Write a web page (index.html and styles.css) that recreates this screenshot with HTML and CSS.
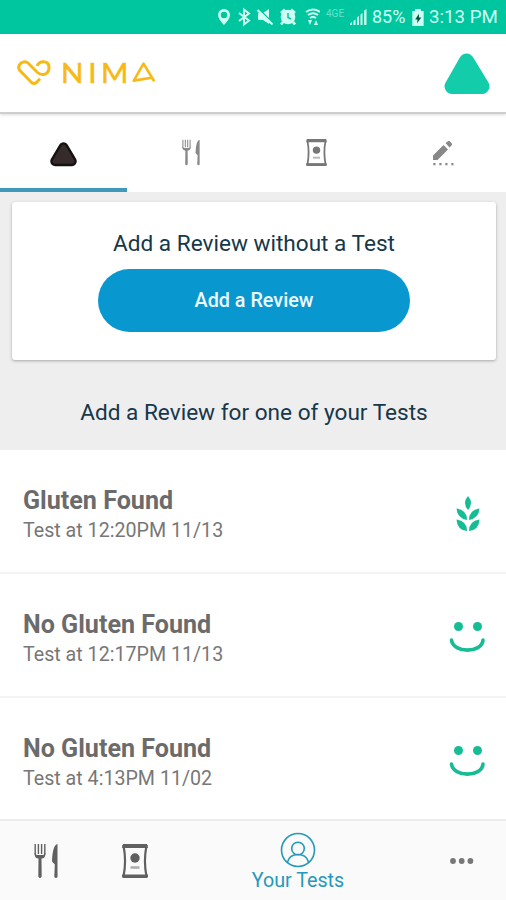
FILE: index.html
```html
<!DOCTYPE html>
<html lang="en">
<head>
<meta charset="utf-8">
<meta name="viewport" content="width=device-width">
<title>Nima – Your Tests</title>
<link rel="stylesheet" href="styles.css">
</head>
<body>
<svg width="0" height="0" class="defs" aria-hidden="true">
  <symbol id="cutlery" viewBox="0 0 24 34">
    <path d="M1.2 0V9.5Q1.2 13 6 13T10.8 9.5V0M4.4 0V10M7.6 0V10" fill="none" stroke="currentColor" stroke-width="1.4"/>
    <path d="M.5 9Q.5 14.500 4.500 14.500L4.300 32.500Q6 35.500 7.700 32.500L7.500 14.500Q11.500 14.500 11.500 9L9.500 11H2.500ZM23.500 0Q18.500 1 18 17.500L20.800 20.500L20.300 33Q22 35 23.500 33Z" fill="currentColor"/>
  </symbol>
  <symbol id="packet" viewBox="0 0 26 34">
    <path d="M1.600 2H24.400Q21.500 17 24.400 32H1.600Q4.500 17 1.600 2Z" fill="none" stroke="currentColor" stroke-width="2.200"/>
    <path d="M1 0H25L26 4H0ZM0 30.500H26V33L25 34H1L0 33Z" fill="currentColor"/>
    <circle cx="13" cy="14" r="4.700" fill="currentColor"/>
    <path d="M8.500 23.500H17.500" stroke="currentColor" stroke-width="2.500" opacity=".5"/>
  </symbol>
  <symbol id="smile" viewBox="0 0 36 30">
    <circle cx="9.500" cy="4.500" r="4.500" fill="currentColor"/>
    <circle cx="28.500" cy="4.500" r="4.500" fill="currentColor"/>
    <path d="M2.500 18C4 31.500 33 31.500 34 18" fill="none" stroke="currentColor" stroke-width="3.600" stroke-linecap="round"/>
  </symbol>
</svg>

<div class="status">
  <svg class="status-icons" viewBox="0 0 102 20" fill="currentColor">
    <path fill-rule="evenodd" d="M6 2A6 6 0 0 0 0 8C0 12 6 18 6 18S12 12 12 8A6 6 0 0 0 6 2ZM6 4.800A3.200 3.200 0 1 1 6 11.200A3.200 3.200 0 0 1 6 4.800Z"/>
    <path d="M21 6L31 13.500L26 17.500V2.500L31 6.500L21 14" fill="none" stroke="currentColor" stroke-width="2"/>
    <path d="M40 6H45L51 2V17L45 13H40Z"/>
    <path d="M41 2L55 16" stroke="#00c6a0" stroke-width="1.500"/>
    <path d="M39.500 3L54.500 17.500" stroke="currentColor" stroke-width="2.200"/>
    <circle cx="70" cy="10" r="7.300"/>
    <path d="M63 6L67 2.500M77 6L73 2.500M65 15L63 17.500M75 15L77 17.500" stroke="currentColor" stroke-width="2.800"/>
    <path d="M70 6V10.500L73 12" fill="none" stroke="#00c6a0" stroke-width="1.500"/>
    <path d="M88 5Q95 0 102 5M90 8Q95 4.500 100 8M92 11Q95 9 98 11" fill="none" stroke="currentColor" stroke-width="2"/>
    <path d="M90 13H94L92 18ZM96 18H100L98 13Z"/>
  </svg>
  <span class="network">4GE</span>
  <svg class="signal" viewBox="0 0 17 16" fill="currentColor"><path d="M0 16V14.500L2 13V16ZM3.500 16V12L5.500 10.500V16ZM7 16V8.500L9 7V16ZM10.500 16V5.500L12.500 4V16ZM14.200 16V1.500L16.500 0V16Z"/></svg>
  <span class="battery-text">85%</span>
  <svg class="battery" viewBox="0 0 12 18"><path d="M3 0H9V2H12V18H0V2H3Z" fill="currentColor"/><path d="M7 5L3 11H5.500L5 15L9.500 9H7Z" fill="#064f46"/></svg>
  <span class="clock">3:13 PM</span>
</div>

<header class="header">
  <div class="logo" role="img" aria-label="Nima">
    <svg class="heart" viewBox="0 0 33 26" fill="none" stroke="currentColor" stroke-width="3"><path d="M19.500 6C22 0 31.500 0 31.500 7.500C31.500 14.500 24.500 16.500 20 12.500L11 3.500C6.500 -1 -1 4.500 2 10L14 22.500Q16.500 24.500 19 22.500L22.500 18.800"/></svg>
    <span class="wordmark">NIM</span>
    <svg class="delta" viewBox="0 0 24 20" fill="none" stroke="currentColor" stroke-width="2.600" stroke-linejoin="round"><path d="M22.200 19.200L11.500 1.600L1.800 18.600L19.500 15.800"/></svg>
  </div>
  <svg class="device" viewBox="0 0 46 42"><path d="M22.500 8L38 33.500H8Z" fill="currentColor" stroke="currentColor" stroke-width="15" stroke-linejoin="round"/></svg>
</header>

<nav class="tabs">
  <a class="tab active"><svg class="tab-device" viewBox="0 0 26 24"><path d="M13 5L21 18.500H5Z" fill="#362b2b" stroke="#151111" stroke-width="9.500" stroke-linejoin="round"/><path d="M13 5L21 18.500H5Z" fill="#362b2b" stroke="#362b2b" stroke-width="5" stroke-linejoin="round"/></svg></a>
  <a class="tab"><svg class="tab-cutlery"><use href="#cutlery"/></svg></a>
  <a class="tab"><svg class="tab-packet"><use href="#packet"/></svg></a>
  <a class="tab"><svg class="tab-pencil" viewBox="0 0 21 25" fill="currentColor"><path d="M0 19V14.500L10.500 4L15 8.500L4.500 19ZM12.500 2L15 .2Q16 -.5 17 .5L18.800 2.500Q19.500 3.500 18.500 4.500L16.500 6.500Z"/><path d="M.3 22H2.500V24.300H.3ZM6.300 22H8.500V24.300H6.300ZM12.300 22H14.500V24.300H12.300ZM18.300 22H20.500V24.300H18.300Z"/></svg></a>
</nav>

<section class="review">
  <div class="card">
    <h2 class="title">Add a Review without a Test</h2>
    <button class="button">Add a Review</button>
  </div>
  <h2 class="title list-title">Add a Review for one of your Tests</h2>
</section>

<main class="list">
  <article class="row">
    <div><h3>Gluten Found</h3><p>Test at 12:20PM 11/13</p></div>
    <svg class="wheat" viewBox="0 0 24 36" fill="currentColor">
      <path d="M12 0Q18 7 12 14Q6 7 12 0ZM.5 12.500Q11 14 11 24Q1 22 .5 12.500ZM23.500 12.500Q13 14 13 24Q23 22 23.500 12.500ZM.5 23.500Q11 25 11 35Q1 34 .5 23.500ZM23.500 23.500Q13 25 13 35Q23 34 23.500 23.500Z"/>
    </svg>
  </article>
  <article class="row">
    <div><h3>No Gluten Found</h3><p>Test at 12:17PM 11/13</p></div>
    <svg class="smile"><use href="#smile"/></svg>
  </article>
  <article class="row">
    <div><h3>No Gluten Found</h3><p>Test at 4:13PM 11/02</p></div>
    <svg class="smile"><use href="#smile"/></svg>
  </article>
</main>

<nav class="bottom">
  <a class="item"><svg class="nav-cutlery"><use href="#cutlery"/></svg></a>
  <a class="item"><svg class="nav-packet"><use href="#packet"/></svg></a>
  <a class="item selected">
    <svg class="person" viewBox="0 0 36 36" fill="none" stroke="currentColor" stroke-width="1.600"><circle cx="18" cy="18" r="16.500"/><circle cx="18" cy="16.500" r="6.300"/><path d="M7.500 30C9 24.500 13 22.500 18 22.500S27 24.500 28.500 30"/></svg>
    <span>Your Tests</span>
  </a>
  <a class="item"><svg class="more" viewBox="0 0 24 6" fill="currentColor"><circle cx="3" cy="3" r="2.900"/><circle cx="11.700" cy="3" r="2.900"/><circle cx="20.400" cy="3" r="2.900"/></svg></a>
</nav>
</body>
</html>
```
FILE: styles.css
```css
* { box-sizing: border-box; }
body {
  margin: 0;
  width: 506px;
  height: 900px;
  overflow: hidden;
  display: flex;
  flex-direction: column;
  background: #fff;
  font-family: Roboto, sans-serif;
}
h2, h3, p { margin: 0; }
svg { display: block; flex: none; }
.defs { display: none; }

.status {
  height: 34px;
  flex: none;
  display: flex;
  align-items: center;
  padding-left: 218px;
  background: #00c6a0;
  color: #ccfff1;
  font-size: 18.700px;
  line-height: 36px;
  white-space: nowrap;
}
.status-icons { width: 102px; height: 20px; }
.network { width: 20px; margin-left: 6px; font-size: 10px; line-height: 20px; align-self: flex-start; margin-top: 4px; opacity: .5; }
.signal { width: 17px; height: 16px; margin-left: 4px; }
.battery-text { width: 34px; margin-left: 5px; font-size: 18px; }
.battery { width: 12px; height: 17px; margin-left: 6px; }
.clock { margin-left: 5px; }

.header {
  position: relative;
  height: 80px;
  flex: none;
  display: flex;
  justify-content: space-between;
  padding: 19px 16px 0 17px;
  background: #fff;
  border-bottom: 2px solid #cecece;
  box-shadow: 0 1px 3px rgba(0, 0, 0, .14);
}
.logo { display: flex; color: #f7b916; }
.heart { width: 34px; height: 26px; margin-top: 7px; }
.wordmark {
  margin: 9px 0 0 10px;
  width: 71px;
  font: 27px/22px Lato, sans-serif;
  letter-spacing: 4.300px;
  -webkit-text-stroke: .5px #f7b916;
  transform: scaleX(1.09);
  transform-origin: left;
}
.delta { width: 24px; height: 20px; margin-top: 9px; }
.device { width: 46px; height: 42px; color: #12ccaa; }

.tabs { height: 78px; flex: none; display: grid; grid-template-columns: repeat(4, 1fr); }
.tab { display: flex; justify-content: center; padding-top: 25px; color: #888; }
.active { border-bottom: 4px solid #4099bb; }
.tab-device { width: 27px; height: 25px; margin-top: 3px; }
.tab-cutlery { width: 18px; height: 27px; margin-left: 2px; }
.tab-packet { width: 21px; height: 27px; color: #777; }
.tab-pencil { width: 21px; height: 25px; margin: 2px 0 0 1px; }

.review { height: 258px; flex: none; padding: 10px 10px 0 12px; background: #eee; }
.card {
  height: 158px;
  display: flex;
  flex-direction: column;
  align-items: center;
  padding-top: 27px;
  background: #fff;
  border-radius: 3px;
  box-shadow: 0 1px 3px rgba(0, 0, 0, .3);
}
.title { height: 30px; font-size: 22.600px; font-weight: 400; line-height: 30px; color: #17374a; white-space: nowrap; text-align: center; }
.button {
  width: 312px;
  height: 63px;
  margin-top: 10px;
  padding: 0;
  border: 0;
  border-radius: 32px;
  background: #0997d0;
  color: #edfaff;
  font: 500 19.800px/63px Roboto, sans-serif;
}
.list-title { margin-top: 38px; }

.list { height: 371px; flex: none; }
.row {
  height: 124px;
  display: flex;
  justify-content: space-between;
  padding: 36px 21px 0 23px;
  border-bottom: 2px solid #f4f4f4;
  color: #6b6b6b;
}
.row:last-child { border: 0; }
.row h3 { font-size: 25.100px; font-weight: 700; line-height: 30px; }
.row p { font-size: 19.650px; line-height: 30px; color: #777; }
.wheat { width: 24px; height: 36px; margin: 10px 5px 0 0; color: #16bd94; }
.smile { width: 36px; height: 30px; margin-top: 12px; color: #16bd94; }

.bottom {
  height: 81px;
  flex: none;
  display: grid;
  grid-template-columns: 91px 88px 238px 89px;
  background: #fafafa;
  border-top: 2px solid #ececec;
  margin-top: -2px;
}
.item { display: flex; flex-direction: column; align-items: center; color: #606060; }
.nav-cutlery { width: 24px; height: 34px; margin-top: 23px; }
.nav-packet { width: 26px; height: 34px; margin-top: 23px; }
.selected { color: #2499ba; padding-top: 11px; }
.person { width: 36px; height: 36px; }
.selected span { font-size: 19.700px; line-height: 25px; }
.more { width: 24px; height: 6px; margin: 37px 0 0 1px; color: #777; }
```
